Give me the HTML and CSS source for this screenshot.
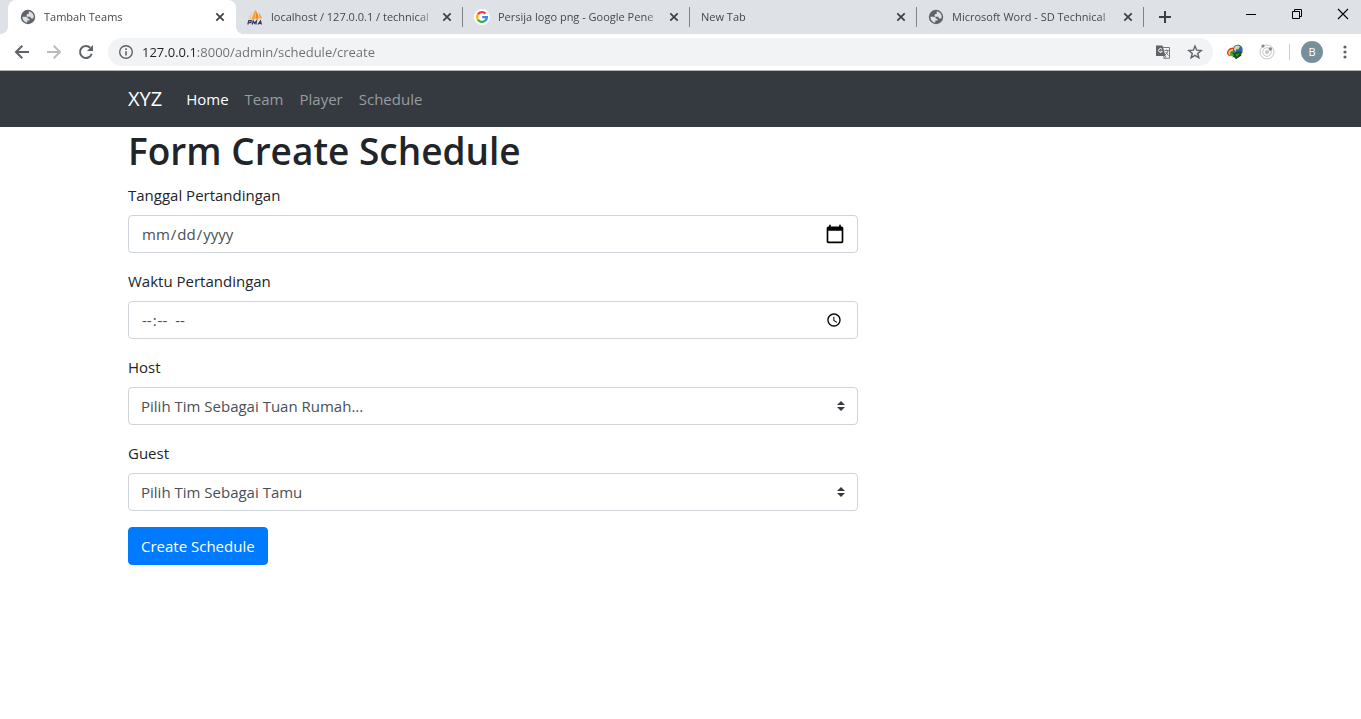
FILE: index.html
```
<!DOCTYPE html>
<html lang="en">
<head>
<meta charset="utf-8">
<meta name="viewport" content="width=device-width, initial-scale=1">
<title>Tambah Teams</title>
<link rel="stylesheet" href="styles.css">
</head>
<body>
<svg class="defs" aria-hidden="true">
  <symbol id="globe" viewBox="0 0 16 16">
    <circle cx="8" cy="8" r="7.200" fill="#5f6368"/>
    <path d="M2.400 7.800h3.400c1.500 0 2.100.8 2.100 1.900h1.600v1.700H7.300v2.200C4.500 13.600 2.400 11 2.400 7.800ZM8.700 2.400c2.700 0 5 2.400 5 5.500-.1.700-.2 1.200-.5 1.600h-1.500c-.9 0-1.300-.5-1.300-1.700H7.900c-.9 0-1.300-.5-1.300-1.400 0-.9.500-1.300 1.300-1.300h.8Z" fill="#dee1e6"/>
  </symbol>
  <symbol id="close" viewBox="0 0 16 16">
    <path d="m4.300 4.300 7.400 7.400m0-7.400-7.400 7.400" stroke="#3c4043" stroke-width="1.700" fill="none"/>
  </symbol>
</svg>

<header class="browser">
  <div class="tabstrip">
    <div class="tab tab-active">
      <svg class="icon"><use href="#globe"/></svg>
      <span class="tab-title">Tambah Teams</span>
      <button class="tab-close" aria-label="Close Tambah Teams"><svg class="icon"><use href="#close"/></svg></button>
    </div>
    <div class="tab">
      <svg class="icon" viewBox="0 0 16 16">
        <path d="M4.500 2 1.500 10.500h2.800Z" fill="#f8c98c"/>
        <path d="M7.600 1.200 4.600 10.500l4-.6Z" fill="#f6a33c"/>
        <path d="M8.200.8c2 2.600 3.200 5.200 3.600 8.700l-3 .4Z" fill="#f38b13"/>
        <path d="M11.600 3.500c1.600 1.700 2.700 3.700 3.300 5.800l-2.300.2Z" fill="#f6a33c"/>
        <path d="M.8 15.500 1.800 11.600h2.500l-.4 2H1.600M5.200 15.500l1-3.600 1.300 2.500 2-2.500-.6 3.600M10.800 15.500l2.700-3.700.9 3.700M11.800 14.300h2.500" fill="none" stroke="#363a68" stroke-width="1.200"/>
      </svg>
      <span class="tab-title">localhost / 127.0.0.1 / technical</span>
      <button class="tab-close" aria-label="Close localhost"><svg class="icon"><use href="#close"/></svg></button>
    </div>
    <div class="tab">
      <svg class="icon" viewBox="0 0 16 16">
        <circle cx="8" cy="8" r="8" fill="#fff"/>
        <g fill="none" stroke-width="2.300">
          <path d="M3.900 5.400A4.900 4.900 0 0 1 11.500 4.600" stroke="#ea4335"/>
          <path d="M3.900 10.600A4.900 4.900 0 0 1 3.900 5.400" stroke="#fbbc05"/>
          <path d="M11.200 11.700A4.900 4.900 0 0 1 3.900 10.600" stroke="#34a853"/>
          <path d="M8.200 8.100h4.700a4.900 4.900 0 0 1-1.700 3.600" stroke="#4285f4"/>
        </g>
      </svg>
      <span class="tab-title">Persija logo png - Google Pene</span>
      <button class="tab-close" aria-label="Close Persija logo png"><svg class="icon"><use href="#close"/></svg></button>
    </div>
    <div class="tab">
      <span class="tab-title">New Tab</span>
      <button class="tab-close" aria-label="Close New Tab"><svg class="icon"><use href="#close"/></svg></button>
    </div>
    <div class="tab">
      <svg class="icon"><use href="#globe"/></svg>
      <span class="tab-title">Microsoft Word - SD Technical</span>
      <button class="tab-close" aria-label="Close Microsoft Word"><svg class="icon"><use href="#close"/></svg></button>
    </div>
    <button class="new-tab" aria-label="New tab">
      <svg class="icon" viewBox="0 0 16 16"><path d="M8 2v12M2 8h12" stroke="#3c4043" stroke-width="2"/></svg>
    </button>
    <div class="window-controls">
      <button aria-label="Minimize"><svg class="icon" viewBox="0 0 16 16"><path d="M3 8.500h10" stroke="#000"/></svg></button>
      <button aria-label="Restore"><svg class="icon" viewBox="0 0 16 16"><path d="M3.500 5.500h7v7h-7ZM5.500 5.500v-2h7v7h-2" fill="none" stroke="#000"/></svg></button>
      <button aria-label="Close window"><svg class="icon" viewBox="0 0 16 16"><path d="m3 3 10 10m0-10L3 13" stroke="#000" stroke-width="1.100"/></svg></button>
    </div>
  </div>

  <div class="toolbar">
    <button class="tool" aria-label="Back"><svg class="icon" viewBox="0 0 16 16"><path d="M15 8H2.500M8.300 1.700 2 8l6.300 6.300" fill="none" stroke="#5f6368" stroke-width="2"/></svg></button>
    <button class="tool" aria-label="Forward"><svg class="icon" viewBox="0 0 16 16"><path d="M1 8h12.500M7.700 1.700 14 8l-6.300 6.300" fill="none" stroke="#babcbe" stroke-width="2"/></svg></button>
    <button class="tool" aria-label="Reload"><svg class="icon" viewBox="0 0 16 16"><path d="M13.700 9.800A6 6 0 1 1 12.300 3.800" fill="none" stroke="#5f6368" stroke-width="2"/><path d="M15 1v6H9Z" fill="#5f6368"/></svg></button>
    <div class="omnibox">
      <svg class="icon" viewBox="0 0 16 16"><circle cx="8" cy="8" r="6.300" fill="none" stroke="#5f6368" stroke-width="1.400"/><path d="M8 7.200v4.300M8 4.300v1.600" stroke="#5f6368" stroke-width="1.600"/></svg>
      <input class="address" type="text" aria-label="Address" value="127.0.0.1:8000/admin/schedule/create">
      <button class="omni-action" aria-label="Translate"><svg class="icon" viewBox="0 0 16 16">
        <path d="M7 3.500h7.500v10.800H8.500" fill="none" stroke="#76797d"/>
        <path d="M1 1.500h6.500l3 10.500H1Z" fill="#5f6368"/>
        <path d="M7 5.200a1.900 1.900 0 1 0 .3 2H5.500" fill="none" stroke="#fff"/>
        <path d="M9.500 6.500h4.300M11.500 5.500v1M13 6.500c-.3 2-1.500 3.500-3 4.500M10.500 8l3 3.500M8.500 12l1 2 1.500-2" fill="none" stroke="#76797d"/>
      </svg></button>
      <button class="omni-action" aria-label="Bookmark"><svg class="icon" viewBox="0 0 16 16"><path d="m8 2 1.700 4.200 4.500.3-3.500 2.900 1.200 4.400L8 11.400l-3.900 2.400 1.200-4.400-3.500-2.900 4.500-.3Z" fill="none" stroke="#5f6368" stroke-width="1.400"/></svg></button>
    </div>
    <div class="extensions">
      <button class="tool" aria-label="Download manager"><svg class="icon" viewBox="0 0 16 16">
        <path d="M0 9C0 6 2.500 3.600 6 3.500l4 8-6 .8C1.500 12 0 11 0 9Z" fill="#df3427"/>
        <path d="M1.300 9.300C1.300 6.700 3.500 5 6.500 5l2 6-4.500.5C2.300 11.500 1.300 10.500 1.300 9.300Z" fill="#f5d934"/>
        <path d="M2.800 9.500c0-2 1.500-3 4-3l1 4.500H4.500c-1 0-1.700-.5-1.700-1.500Z" fill="#45a33c"/>
        <circle cx="10.800" cy="5.700" r="4.900" fill="#3664b5"/>
        <path d="M7 5.500C7 3 9 1.400 11 1.500l2 1-1.500 2.500L9 5.500 8.500 8Z" fill="#cfdc9b"/>
        <path d="m4.500 8.300 3.500.9 1.500-1.700 6.300.3-1.800 2.400.5 1.300-5.500 3.800-2-2.300-2 .5L7 11Z" fill="#125419"/>
        <path d="m8.500 10.200 4.500-1-3.300 3.600Z" fill="#3f9b36"/>
      </svg></button>
      <button class="tool" aria-label="Orbit extension"><svg class="icon" viewBox="0 0 16 16"><g fill="none" stroke="#c6c6c6"><circle cx="8" cy="8" r="7"/><circle cx="8" cy="8" r="4.300"/></g><circle cx="8" cy="8" r="2" fill="#c6c6c6"/><circle cx="4" cy="2" r="1.600" fill="#888"/><circle cx="11.300" cy="5" r="1.700" fill="#888"/></svg></button>
    </div>
    <button class="avatar" aria-label="Profile">B</button>
    <button class="tool" aria-label="Menu"><svg class="icon" viewBox="0 0 16 16"><g fill="#5f6368"><circle cx="8" cy="3" r="1.600"/><circle cx="8" cy="8" r="1.600"/><circle cx="8" cy="13" r="1.600"/></g></svg></button>
  </div>
</header>

<nav class="navbar">
  <div class="container navbar-row">
    <a class="brand" href="#">XYZ</a>
    <div class="nav-links">
      <a class="nav-link nav-link-active" href="#">Home</a>
      <a class="nav-link" href="#">Team</a>
      <a class="nav-link" href="#">Player</a>
      <a class="nav-link" href="#">Schedule</a>
    </div>
  </div>
</nav>

<main class="container">
  <form class="schedule-form">
    <h1>Form Create Schedule</h1>
    <div class="form-group">
      <label for="date">Tanggal Pertandingan</label>
      <input class="control" type="date" id="date">
    </div>
    <div class="form-group">
      <label for="time">Waktu Pertandingan</label>
      <input class="control" type="time" id="time">
    </div>
    <div class="form-group">
      <label for="host">Host</label>
      <select class="control select" id="host"><option>Pilih Tim Sebagai Tuan Rumah...</option></select>
    </div>
    <div class="form-group">
      <label for="guest">Guest</label>
      <select class="control select" id="guest"><option>Pilih Tim Sebagai Tamu</option></select>
    </div>
    <button class="submit" type="button">Create Schedule</button>
  </form>
</main>
</body>
</html>
```

FILE: styles.css
```
*, *::before, *::after { box-sizing: border-box; }

body {
  margin: 0;
  background: #fff;
  color: #212529;
  font-family: "Open Sans", "Noto Sans", sans-serif;
  font-size: 15px;
  line-height: 24px;
}

button, input, select { font: inherit; color: inherit; margin: 0; }
.browser button { border: 0; padding: 0; background: none; }
.defs { display: none; }
.icon { display: block; width: 16px; height: 16px; flex: none; }

/* Browser frame */
.browser { border-bottom: 1px solid #b6b4b6; }

.tabstrip {
  display: flex;
  height: 34px;
  padding-left: 8px;
  background: #dee1e6;
  overflow: hidden;
}

.tab {
  position: relative;
  display: flex;
  align-items: center;
  flex: 0 1 227px;
  min-width: 0;
  gap: 8px;
  padding: 0 8px 0 11px;
  font-size: 11px;
  line-height: 16px;
  color: #45494d;
}

.tab:not(.tab-active)::after {
  content: "";
  position: absolute;
  right: 0;
  top: 7px;
  width: 1px;
  height: 20px;
  background: #808387;
}

.tab-active {
  flex-basis: 228px;
  padding-left: 12px;
  background: #fff;
  border-radius: 8px 8px 0 0;
}

.tab-active::before, .tab-active::after {
  content: "";
  position: absolute;
  bottom: 0;
  width: 8px;
  height: 8px;
}

.tab-active::before { right: 100%; background: radial-gradient(circle at 0 0, #dee1e6 8px, #fff 8px); }
.tab-active::after { left: 100%; background: radial-gradient(circle at 100% 0, #dee1e6 8px, #fff 8px); }

.tab-title {
  flex: 1;
  min-width: 0;
  margin-right: -4px;
  overflow: hidden;
  white-space: nowrap;
  -webkit-mask-image: linear-gradient(to left, transparent, #000 16px);
  mask-image: linear-gradient(to left, transparent, #000 16px);
}

.new-tab { display: grid; place-items: center; width: 42px; }

.window-controls { display: flex; gap: 10px; margin-left: auto; height: 28px; }
.window-controls button { display: grid; place-items: center; width: 36px; }

.toolbar {
  display: flex;
  align-items: center;
  height: 36px;
  padding-left: 6px;
  background: #fff;
}

.tool { display: grid; place-items: center; width: 32px; height: 28px; }

.omnibox {
  display: flex;
  align-items: center;
  flex: 1;
  gap: 8px;
  height: 28px;
  margin: 0 6px;
  padding: 0 10px;
  border-radius: 14px;
  background: #f1f3f4;
}

.address {
  flex: 1;
  min-width: 0;
  padding: 0;
  border: 0;
  outline: 0;
  font-size: 13px;
  line-height: 20px;
  color: transparent;
  background: linear-gradient(to right, #202124 54px, #6b6f73 54px);
  -webkit-background-clip: text;
  background-clip: text;
}

.omni-action + .omni-action { margin-left: 8px; }

.extensions {
  display: flex;
  padding-right: 7px;
  margin-right: 11px;
  background: linear-gradient(#c9cbce, #c9cbce) right center / 1px 16px no-repeat;
}

.browser .avatar {
  width: 22px;
  height: 22px;
  margin-right: 6px;
  border-radius: 50%;
  background: #78909c;
  color: #fff;
  font-size: 11px;
  line-height: 22px;
}

/* Page */
.container { max-width: 1145px; margin: 0 auto; padding: 0 15px 0 20px; }

.navbar { padding: 8px 0; background: #343a40; }
.navbar-row { display: flex; align-items: center; gap: 16px; }
.brand { color: #fff; font-size: 20px; line-height: 30px; text-decoration: none; }
.nav-links { display: flex; }
.nav-link { padding: 8px; color: #999c9f; text-decoration: none; }
.nav-link-active { color: #fff; }

.schedule-form { max-width: 730px; }

h1 { margin: 0 0 8px; font-size: 37px; line-height: 48px; font-weight: 600; }

.form-group { margin-bottom: 16px; }
label { display: block; margin-bottom: 8px; }

.control {
  display: block;
  width: 100%;
  height: 38px;
  padding: 6px 12px;
  border: 1px solid #ced4da;
  border-radius: 4px;
  background: #fff;
  color: #495057;
}

.control[type="date"]::-webkit-calendar-picker-indicator { width: 20px; height: 20px; padding: 0; background-size: 20px 20px; }
.control[type="time"]::-webkit-datetime-edit-ampm-field { margin-left: 4px; }

.select {
  appearance: none;
  background: #fff url("data:image/svg+xml,%3csvg xmlns='http://www.w3.org/2000/svg' width='4' height='5' viewBox='0 0 4 5'%3e%3cpath fill='%23343a40' d='M2 0L0 2h4zm0 5L0 3h4z'/%3e%3c/svg%3e") no-repeat right 12px center / 8px 10px;
}

.submit {
  padding: 6px 12px;
  border: 1px solid #007bff;
  border-radius: 4px;
  background: #007bff;
  color: #fff;
}
```
